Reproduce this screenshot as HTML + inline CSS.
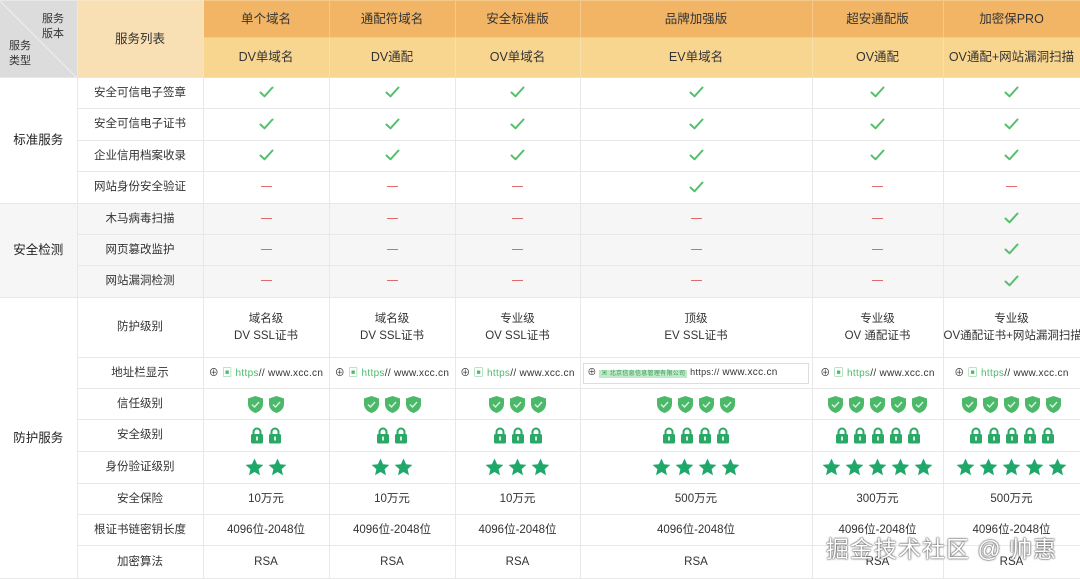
<!DOCTYPE html><html><head><meta charset="utf-8"><style>
*{margin:0;padding:0;box-sizing:border-box}
body{width:1080px;height:578px;overflow:hidden;background:#fff;font-family:"Liberation Sans","Noto Sans CJK SC",sans-serif;color:#333;position:relative}
table{border-collapse:collapse;table-layout:fixed;position:absolute;left:0;top:0;width:1080px}
td{border:1px solid #e8e8e8;text-align:center;vertical-align:middle;font-size:11.5px;padding:0;line-height:17px;overflow:hidden;white-space:nowrap}
tr td:first-child{border-left:none}
.h1{background:#f2b565;font-size:12.5px;color:#333;height:37px;border-color:#f5c98a}
.h2{background:#f8d690;font-size:12.5px;height:40px;border-color:#f9dfaa}
.hl{background:#f8dfb4;font-size:12.5px;border-color:#f9e4c2}
.h0{background:#dcdcdc;position:relative}
.g td{background:#f6f6f6}
.cat{font-size:12.5px;color:#222}
.ds{display:inline-block;width:11px;height:1px;background:#e06a6a;vertical-align:middle;position:relative;top:0}
svg{vertical-align:middle;margin:0 2px}
.url{font-size:10px;color:#333;letter-spacing:.3px}
.url b{color:#4cbb6c;font-weight:normal}
.wm{position:absolute;left:826px;top:530px;font-size:23px;color:#fff;text-shadow:0 0 2px #444,0 0 1px #222;letter-spacing:1px}
</style></head><body>
<table>
<colgroup><col style="width:77px"><col style="width:126px"><col style="width:126px"><col style="width:126px"><col style="width:125px"><col style="width:232px"><col style="width:131px"><col style="width:137px"></colgroup>
<tr><td class="h0" rowspan="2"><svg width="77" height="77" style="position:absolute;left:0;top:0;margin:0"><line x1="0" y1="0" x2="77" y2="77" stroke="#eee" stroke-width="1"/></svg><span style="position:absolute;left:42px;top:11px;font-size:11px;line-height:15px;text-align:left">服务<br>版本</span><span style="position:absolute;left:9px;top:38px;font-size:11px;line-height:15px;text-align:left">服务<br>类型</span></td>
<td class="hl" rowspan="2">服务列表</td><td class="h1">单个域名</td><td class="h1">通配符域名</td><td class="h1">安全标准版</td><td class="h1">品牌加强版</td><td class="h1">超安通配版</td><td class="h1">加密保PRO</td></tr>
<tr><td class="h2">DV单域名</td><td class="h2">DV通配</td><td class="h2">OV单域名</td><td class="h2">EV单域名</td><td class="h2">OV通配</td><td class="h2">OV通配+网站漏洞扫描</td></tr>
<tr style="height:31px"><td class="cat" rowspan="4">标准服务</td><td>安全可信电子签章</td><td class="c"></td><td class="c"></td><td class="c"></td><td class="c"></td><td class="c"></td><td class="c"></td></tr>
<tr style="height:32px"><td>安全可信电子证书</td><td class="c"></td><td class="c"></td><td class="c"></td><td class="c"></td><td class="c"></td><td class="c"></td></tr>
<tr style="height:31px"><td>企业信用档案收录</td><td class="c"></td><td class="c"></td><td class="c"></td><td class="c"></td><td class="c"></td><td class="c"></td></tr>
<tr style="height:32px"><td>网站身份安全验证</td><td><i class="ds"></i></td><td><i class="ds"></i></td><td><i class="ds"></i></td><td class="c"></td><td><i class="ds"></i></td><td><i class="ds"></i></td></tr>
<tr class="g" style="height:31px"><td class="cat" rowspan="3">安全检测</td><td>木马病毒扫描</td><td><i class="ds"></i></td><td><i class="ds"></i></td><td><i class="ds"></i></td><td><i class="ds"></i></td><td><i class="ds"></i></td><td class="c"></td></tr>
<tr class="g" style="height:31px"><td>网页篡改监护</td><td><i class="ds"></i></td><td><i class="ds"></i></td><td><i class="ds"></i></td><td><i class="ds"></i></td><td><i class="ds"></i></td><td class="c"></td></tr>
<tr class="g" style="height:32px"><td>网站漏洞检测</td><td><i class="ds"></i></td><td><i class="ds"></i></td><td><i class="ds"></i></td><td><i class="ds"></i></td><td><i class="ds"></i></td><td class="c"></td></tr>
<tr style="height:60px"><td class="cat" rowspan="8">防护服务</td><td>防护级别</td><td>域名级<br>DV SSL证书</td><td>域名级<br>DV SSL证书</td><td>专业级<br>OV SSL证书</td><td>顶级<br>EV SSL证书</td><td>专业级<br>OV 通配证书</td><td>专业级<br>OV通配证书+网站漏洞扫描</td></tr>
<tr style="height:31px"><td>地址栏显示</td>
<td class="url">⊕ <b>▣ https</b>// www.xcc.cn</td><td class="url">⊕ <b>▣ https</b>// www.xcc.cn</td><td class="url">⊕ <b>▣ https</b>// www.xcc.cn</td>
<td class="url"><span style="display:inline-block;border:1px solid #ddd;padding:0 30px 0 3px;font-size:9px">⊕ <span style="background:#bfe9c8;color:#3a9a55;font-size:6px;padding:1px 2px">▣ 北京信息信息管理有限公司</span> https:// <span style="font-size:10px">www.xcc.cn</span></span></td>
<td class="url">⊕ <b>▣ https</b>// www.xcc.cn</td><td class="url">⊕ <b>▣ https</b>// www.xcc.cn</td></tr>
<tr style="height:31px"><td>信任级别</td>
<td id="s1"></td><td id="s2"></td><td id="s3"></td><td id="s4"></td><td id="s5"></td><td id="s6"></td></tr>
<tr style="height:32px"><td>安全级别</td>
<td id="l1"></td><td id="l2"></td><td id="l3"></td><td id="l4"></td><td id="l5"></td><td id="l6"></td></tr>
<tr style="height:32px"><td>身份验证级别</td>
<td id="t1"></td><td id="t2"></td><td id="t3"></td><td id="t4"></td><td id="t5"></td><td id="t6"></td></tr>
<tr style="height:31px"><td>安全保险</td><td>10万元</td><td>10万元</td><td>10万元</td><td>500万元</td><td>300万元</td><td>500万元</td></tr>
<tr style="height:31px"><td>根证书链密钥长度</td><td>4096位-2048位</td><td>4096位-2048位</td><td>4096位-2048位</td><td>4096位-2048位</td><td>4096位-2048位</td><td>4096位-2048位</td></tr>
<tr style="height:33px"><td>加密算法</td><td>RSA</td><td>RSA</td><td>RSA</td><td>RSA</td><td>RSA</td><td>RSA</td></tr>
</table>
<div class="wm">掘金技术社区 @ 帅惠</div>
<script>
var ck='<svg width="15" height="12" viewBox="0 0 15 12"><path d="M1.5 6.5l4 3.8L13.5 1.5" stroke="#55bf6e" stroke-width="2" fill="none" stroke-linecap="round" stroke-linejoin="round"/></svg>';
document.querySelectorAll('td.c').forEach(function(e){e.innerHTML=ck});
var sh='<svg width="17" height="19" viewBox="0 0 17 19"><path d="M8.5 1L16 3.5V9c0 4.5-3.3 7.6-7.5 9C4.3 16.6 1 13.5 1 9V3.5z" fill="#4cb96a"/><path d="M5 9.5l2.5 2.5 4.5-5" stroke="#d9f2df" stroke-width="1.4" fill="none"/></svg>';
var lk='<svg width="14" height="17" viewBox="0 0 14 17"><path d="M3.5 7V5a3.5 3.5 0 0 1 7 0v2" stroke="#2aa866" stroke-width="2" fill="none"/><rect x="1" y="7" width="12" height="9.5" rx="1.5" fill="#2aa866"/><rect x="6.2" y="9.5" width="1.6" height="4" fill="#fff"/></svg>';
var st='<svg width="19" height="18" viewBox="0 0 19 18"><path d="M9.5 0.5l2.6 5.8 6.3.6-4.8 4.2 1.4 6.2-5.5-3.3-5.5 3.3 1.4-6.2L0.6 6.9l6.3-.6z" fill="#1fa86a"/></svg>';
var ns=[2,3,3,4,5,5],nl=[2,2,3,4,5,5],nt=[2,2,3,4,5,5];
for(var i=0;i<6;i++){document.getElementById('s'+(i+1)).innerHTML=sh.repeat(ns[i]);document.getElementById('l'+(i+1)).innerHTML=lk.repeat(nl[i]);document.getElementById('t'+(i+1)).innerHTML=st.repeat(nt[i]);}
</script>
</body></html>
